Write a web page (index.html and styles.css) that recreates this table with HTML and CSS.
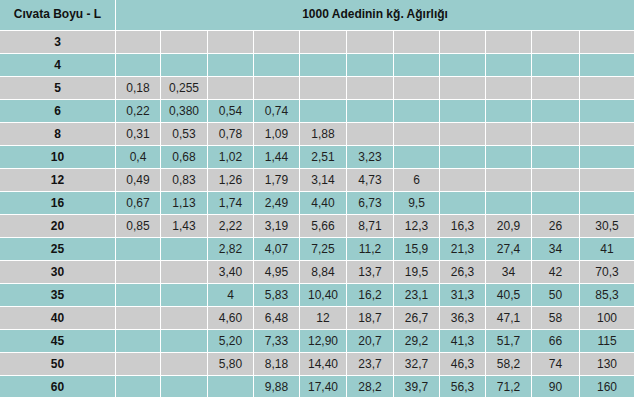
FILE: index.html
```html
<!DOCTYPE html>
<html lang="tr">
<head>
<meta charset="utf-8">
<title>Cıvata Ağırlıkları</title>
<link rel="stylesheet" href="styles.css">
</head>
<body>
<table class="weights">
  <colgroup>
    <col class="c-label">
    <col class="c45"><col class="c47"><col class="c46"><col class="c46"><col class="c47"><col class="c47"><col class="c46"><col class="c46"><col class="c46"><col class="c48"><col class="c-last">
  </colgroup>
  <thead>
    <tr class="teal head">
      <th>Cıvata Boyu - L</th>
      <th colspan="11">1000 Adedinin kğ. Ağırlığı</th>
    </tr>
  </thead>
  <tbody>
    <tr class="gray"><th>3</th><td></td><td></td><td></td><td></td><td></td><td></td><td></td><td></td><td></td><td></td><td></td></tr>
    <tr class="teal"><th>4</th><td></td><td></td><td></td><td></td><td></td><td></td><td></td><td></td><td></td><td></td><td></td></tr>
    <tr class="gray"><th>5</th><td>0,18</td><td>0,255</td><td></td><td></td><td></td><td></td><td></td><td></td><td></td><td></td><td></td></tr>
    <tr class="teal"><th>6</th><td>0,22</td><td>0,380</td><td>0,54</td><td>0,74</td><td></td><td></td><td></td><td></td><td></td><td></td><td></td></tr>
    <tr class="gray"><th>8</th><td>0,31</td><td>0,53</td><td>0,78</td><td>1,09</td><td>1,88</td><td></td><td></td><td></td><td></td><td></td><td></td></tr>
    <tr class="teal"><th>10</th><td>0,4</td><td>0,68</td><td>1,02</td><td>1,44</td><td>2,51</td><td>3,23</td><td></td><td></td><td></td><td></td><td></td></tr>
    <tr class="gray"><th>12</th><td>0,49</td><td>0,83</td><td>1,26</td><td>1,79</td><td>3,14</td><td>4,73</td><td>6</td><td></td><td></td><td></td><td></td></tr>
    <tr class="teal"><th>16</th><td>0,67</td><td>1,13</td><td>1,74</td><td>2,49</td><td>4,40</td><td>6,73</td><td>9,5</td><td></td><td></td><td></td><td></td></tr>
    <tr class="gray"><th>20</th><td>0,85</td><td>1,43</td><td>2,22</td><td>3,19</td><td>5,66</td><td>8,71</td><td>12,3</td><td>16,3</td><td>20,9</td><td>26</td><td>30,5</td></tr>
    <tr class="teal"><th>25</th><td></td><td></td><td>2,82</td><td>4,07</td><td>7,25</td><td>11,2</td><td>15,9</td><td>21,3</td><td>27,4</td><td>34</td><td>41</td></tr>
    <tr class="gray"><th>30</th><td></td><td></td><td>3,40</td><td>4,95</td><td>8,84</td><td>13,7</td><td>19,5</td><td>26,3</td><td>34</td><td>42</td><td>70,3</td></tr>
    <tr class="teal"><th>35</th><td></td><td></td><td>4</td><td>5,83</td><td>10,40</td><td>16,2</td><td>23,1</td><td>31,3</td><td>40,5</td><td>50</td><td>85,3</td></tr>
    <tr class="gray"><th>40</th><td></td><td></td><td>4,60</td><td>6,48</td><td>12</td><td>18,7</td><td>26,7</td><td>36,3</td><td>47,1</td><td>58</td><td>100</td></tr>
    <tr class="teal"><th>45</th><td></td><td></td><td>5,20</td><td>7,33</td><td>12,90</td><td>20,7</td><td>29,2</td><td>41,3</td><td>51,7</td><td>66</td><td>115</td></tr>
    <tr class="gray"><th>50</th><td></td><td></td><td>5,80</td><td>8,18</td><td>14,40</td><td>23,7</td><td>32,7</td><td>46,3</td><td>58,2</td><td>74</td><td>130</td></tr>
    <tr class="teal"><th>60</th><td></td><td></td><td></td><td>9,88</td><td>17,40</td><td>28,2</td><td>39,7</td><td>56,3</td><td>71,2</td><td>90</td><td>160</td></tr>
  </tbody>
</table>
</body>
</html>
```
FILE: styles.css
```css
html, body {
  margin: 0;
  padding: 0;
  background: #ffffff;
}

.weights {
  width: 634px;
  border-collapse: separate;
  border-spacing: 0;
  table-layout: fixed;
  font-family: "Liberation Sans", Arial, sans-serif;
  font-size: 12px;
  color: #1e1e1e;
}

.c-label { width: 116px; }
.c45 { width: 45px; }
.c46 { width: 46px; }
.c47 { width: 47px; }
.c48 { width: 48px; }
.c-last { width: 54px; }

.weights th,
.weights td {
  box-sizing: border-box;
  padding: 0;
  height: 23px;
  text-align: center;
  vertical-align: middle;
  border-right: 1px solid #ffffff;
  border-bottom: 1px solid #ffffff;
  line-height: 14px;
}

.weights th {
  font-weight: bold;
  color: #111111;
}

.weights tr > :last-child {
  border-right: none;
}

.head th {
  height: 31px;
  padding-bottom: 2px;
}

.teal { background: #99cccc; }
.gray { background: #cccccc; }
```
